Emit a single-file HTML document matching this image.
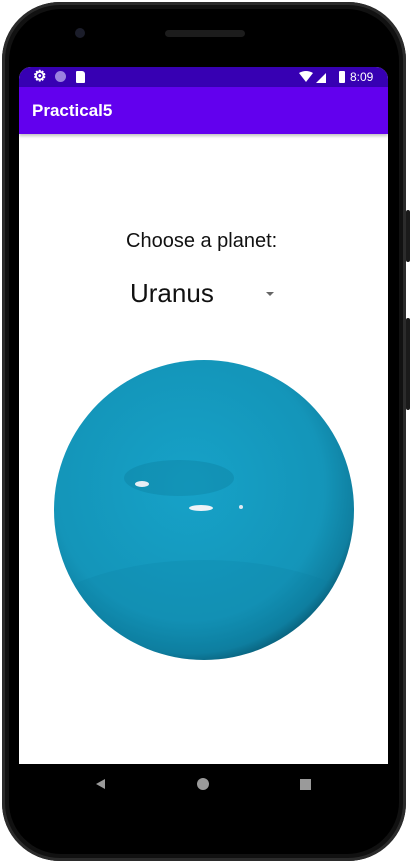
<!DOCTYPE html>
<html><head><meta charset="utf-8"><style>
html,body{margin:0;padding:0;width:411px;height:863px;overflow:hidden;background:#fff;font-family:"Liberation Sans",sans-serif}
.abs{position:absolute}
</style></head><body>
<div class="abs" style="left:0;top:0;width:411px;height:863px;background:#fff"></div>
<div class="abs" style="left:2px;top:2px;width:404px;height:859px;border-radius:58px;background:#111;box-shadow:inset 0 0 0 3px #2b2b2b"></div>
<div class="abs" style="left:9px;top:9px;width:390px;height:845px;border-radius:52px;background:#000"></div>
<div class="abs" style="left:406px;top:210px;width:4px;height:52px;background:#1a1a1a;border-radius:2px"></div>
<div class="abs" style="left:406px;top:318px;width:4px;height:92px;background:#1a1a1a;border-radius:2px"></div>
<div class="abs" style="left:75px;top:28px;width:10px;height:10px;border-radius:50%;background:#1b1d2a"></div>
<div class="abs" style="left:165px;top:30px;width:80px;height:7px;border-radius:4px;background:#1c1c1c"></div>
<div class="abs" style="left:19px;top:67px;width:369px;height:697px;background:#fff;border-radius:12px 12px 0 0;overflow:hidden">
  <div class="abs" style="left:0;top:0;width:369px;height:20px;background:#3700b3"></div>
  <div class="abs" style="left:0;top:20px;width:369px;height:47px;background:#6200ee;box-shadow:0 2px 3px rgba(0,0,0,.25)"></div>
  <div class="abs" style="left:13px;top:34px;color:#fff;font-size:17px;font-weight:bold">Practical5</div>
  <div class="abs" style="left:14px;top:2px;color:#fff;font-size:15px;line-height:15px;font-weight:bold">&#9881;</div>
  <div class="abs" style="left:36px;top:4px;width:11px;height:11px;border-radius:50%;background:#9a82e0"></div>
  <div class="abs" style="left:57px;top:4px;width:9px;height:12px;background:#fff;border-radius:1px 3px 1px 1px"></div>
  <svg class="abs" style="left:280px;top:4px" width="32" height="13" viewBox="0 0 32 13">
    <path d="M0 2 Q7 -2 14 2 L7 11 Z" fill="#fff"/>
    <path d="M17 12 L27 2 L27 12 Z" fill="#fff"/>
  </svg>
  <div class="abs" style="left:320px;top:4px;width:6px;height:12px;background:#fff;border-radius:1px"></div>
  <div class="abs" style="left:331px;top:3px;color:#fff;font-size:12px">8:09</div>
  <div class="abs" style="left:107px;top:163px;font-size:20px;color:#111">Choose a planet:</div>
  <div class="abs" style="left:111px;top:211px;font-size:26px;color:#111">Uranus</div>
  <div class="abs" style="left:247px;top:225px;width:0;height:0;border-left:4px solid transparent;border-right:4px solid transparent;border-top:4px solid #666"></div>
</div>
<svg class="abs" style="left:54px;top:360px" width="300" height="300" viewBox="0 0 300 300">
  <defs>
    <radialGradient id="g" cx="0.45" cy="0.42" r="0.6">
      <stop offset="0" stop-color="#16a2c8"/>
      <stop offset="0.75" stop-color="#1495b9"/>
      <stop offset="0.93" stop-color="#0f7fa0"/>
      <stop offset="1" stop-color="#0a5a73"/>
    </radialGradient>
    <clipPath id="c"><circle cx="150" cy="150" r="150"/></clipPath>
  </defs>
  <circle cx="150" cy="150" r="150" fill="url(#g)"/>
  <g clip-path="url(#c)">
    <ellipse cx="150" cy="300" rx="200" ry="100" fill="#0b7d9e" opacity="0.2"/>
    <ellipse cx="125" cy="118" rx="55" ry="18" fill="#0c7b9b" opacity="0.35"/>
  </g>
  <ellipse cx="88" cy="124" rx="7" ry="3" fill="#e6eef5"/>
  <ellipse cx="147" cy="148" rx="12" ry="3" fill="#eef3f8"/>
  <circle cx="187" cy="147" r="2" fill="#dfe9f2"/>
</svg>
<div class="abs" style="left:19px;top:764px;width:369px;height:40px;background:#000"></div>
<div class="abs" style="left:96px;top:779px;width:0;height:0;border-top:5px solid transparent;border-bottom:5px solid transparent;border-right:9px solid #9a9a9a"></div>
<div class="abs" style="left:197px;top:778px;width:12px;height:12px;border-radius:50%;background:#9a9a9a"></div>
<div class="abs" style="left:300px;top:779px;width:11px;height:11px;background:#9a9a9a"></div>
</body></html>
